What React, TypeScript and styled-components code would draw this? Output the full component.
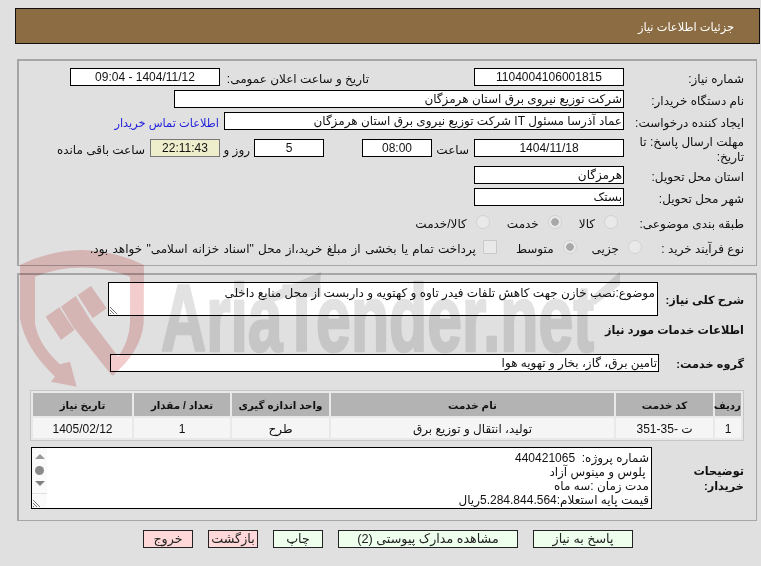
import React from "react";
import styled, { createGlobalStyle } from "styled-components";

const Global = createGlobalStyle`
  html, body { margin: 0; padding: 0; background: #e0e0e0; }
  body { font-family: "Liberation Sans", "DejaVu Sans", sans-serif; font-size: 12px; color: #111; }
`;

const Page = styled.div`
  position: relative; width: 761px; height: 566px; overflow: hidden; direction: rtl; background: #e0e0e0;
`;
const Header = styled.div`
  box-sizing: border-box; margin: 8px 1px 0 15px; height: 36px; border: 1px solid #111; background: #8c6c42;
  color: #fff; display: flex; align-items: center; padding: 1px 25px 0 0; font-size: 11.4px;
`;
const Panel = styled.section<{ $top: number; $h: number; $pt: number }>`
  box-sizing: border-box; margin: ${p => p.$top}px 4px 0 17px; height: ${p => p.$h}px;
  border: 1px solid #a6a6a6; border-width: 2px 1px 1px 2px; padding: ${p => p.$pt}px 12px 0 0;
  display: flex; flex-direction: column;
`;
const Row = styled.div<{ $h?: number; $mt?: number }>`
  display: flex; align-items: center; height: ${p => p.$h ?? 18}px; margin-top: ${p => p.$mt ?? 0}px; flex: none;
`;
const Label = styled.div<{ $w: number; $ms?: number; $bold?: boolean }>`
  width: ${p => p.$w}px; flex: none; text-align: right; line-height: 15px; padding-top: ${p => (p.$bold ? 2 : 4)}px;
  margin-right: ${p => p.$ms ?? 0}px;
  font-weight: ${p => (p.$bold ? 700 : 400)}; font-size: ${p => (p.$bold ? 11.3 : 12)}px;
`;
const Field = styled.div<{ $w: number; $center?: boolean; $ms?: number; $time?: boolean }>`
  box-sizing: border-box; width: ${p => p.$w}px; height: 18px; flex: none; margin-right: ${p => p.$ms ?? 0}px;
  border: 1px solid ${p => (p.$time ? "#777" : "#000")}; background: ${p => (p.$time ? "#eeeecc" : "#fff")};
  text-align: ${p => (p.$center ? "center" : "right")}; padding: 0 1px; line-height: 17px; font-size: 12px; white-space: nowrap; overflow: hidden;
`;
const Inline = styled.span<{ $ms?: number; $w?: number }>`
  margin-right: ${p => p.$ms ?? 0}px; flex: none; font-size: 12px; white-space: nowrap; padding-top: 3px;
  width: ${p => (p.$w ? `${p.$w}px` : "auto")};
`;
const ContactLink = styled.a`
  margin-right: 5px; padding-top: 3px; color: #2222dd; text-decoration: none; font-size: 11.4px; white-space: nowrap;
`;
const Choice = styled.label<{ $ms: number; $gap?: number }>`
  display: inline-flex; align-items: center; gap: ${p => p.$gap ?? 9}px; margin-right: ${p => p.$ms}px; font-size: 12px; white-space: nowrap;
`;
const ChoiceText = styled.span<{ $spread?: boolean }>`
  padding-top: 3px; word-spacing: ${p => (p.$spread ? 1 : 0)}px;
`;
const Radio = styled.input.attrs({ type: "radio", disabled: true })`
  appearance: none; width: 14px; height: 14px; margin: 0; border-radius: 50%; border: 1px solid #d2d2d2;
  background: #e9e9e9; flex: none; box-sizing: border-box; position: relative;
  &:checked { background: radial-gradient(circle, #a8a8a8 0 3.5px, #e9e9e9 4px); }
`;
const Check = styled.input.attrs({ type: "checkbox", disabled: true })`
  appearance: none; width: 14px; height: 14px; margin: 0; border: 1px solid #c8c8c8; background: #e9e9e9; flex: none; border-radius: 1px;
`;
const Area = styled.div<{ $w: number; $h: number }>`
  position: relative; box-sizing: border-box; width: ${p => p.$w}px; height: ${p => p.$h}px; flex: none;
  border: 1px solid #000; background: #fff; padding: 3px 2px 0; line-height: 14px; font-size: 12px; overflow: hidden;
`;
const Grip = styled.svg`
  position: absolute; left: 1px; bottom: 1px; width: 8px; height: 8px;
`;
const ScrollRail = styled.div`
  position: absolute; left: 0; top: 0; bottom: 0; width: 15px; background: #fafafa;
  display: flex; flex-direction: column; align-items: center; padding-top: 6px; box-sizing: border-box;
`;
const ArrowUp = styled.i`
  width: 0; height: 0; border: 5px solid transparent; border-top: 0; border-bottom: 5px solid #999; margin-bottom: 7px;
`;
const ArrowDown = styled.i`
  width: 0; height: 0; border: 5px solid transparent; border-bottom: 0; border-top: 5px solid #808080; margin-top: 6px;
`;
const Thumb = styled.i`
  width: 9px; height: 9px; border-radius: 50%; background: #8a8a8a;
`;
const RailLine = styled.i`
  align-self: stretch; height: 1px; background: #e0e0e0; margin-top: 7px;
`;
const Table = styled.table`
  width: 713px; margin: 18px 0 0 0; border: 1px solid #c6c6c6; border-spacing: 2px; table-layout: fixed;
  background: #e9e9e9; flex: none; font-size: 12px;
`;
const Th = styled.th`
  height: 23px; padding: 0; background: #b3b3b3; font-weight: 700; font-size: 10.3px; text-align: center; white-space: nowrap;
`;
const Td = styled.td`
  height: 18px; padding: 2px 0 0; background: #f5f5f5; text-align: center;
`;
const Buttons = styled.div`
  display: flex; gap: 15px; margin: 9px 128px 0 0;
`;
const Btn = styled.button<{ $w: number; $red?: boolean }>`
  box-sizing: border-box; width: ${p => p.$w}px; height: 18px; padding: 0; border: 1px solid #222; border-radius: 0;
  background: ${p => (p.$red ? "#ffd9d9" : "#eeffee")}; color: #222; font: inherit; font-size: 12.7px; line-height: 14px;
`;
const Watermark = styled.svg`
  position: absolute; left: 0; top: 0; width: 761px; height: 566px; pointer-events: none; mix-blend-mode: multiply;
`;

const Gripper = () => (
  <Grip viewBox="0 0 8 8">
    <path d="M0 1L7 8M0 4L4 8M0 7L1 8" stroke="#777" strokeWidth="1" fill="none" />
  </Grip>
);

export default function App() {
  return (
    <Page>
      <Global />
      <Header>جزئیات اطلاعات نیاز</Header>
      <Panel $top={15} $h={207} $pt={7}>
        <Row>
          <Label $w={120}>شماره نیاز:</Label>
          <Field $w={150} $center>1104004106001815</Field>
          <Label $w={145} $ms={105}>تاریخ و ساعت اعلان عمومی:</Label>
          <Field $w={150} $center $ms={4}>1404/11/12 - 09:04</Field>
        </Row>
        <Row $mt={4}>
          <Label $w={120}>نام دستگاه خریدار:</Label>
          <Field $w={450}>شرکت توزیع نیروی برق استان هرمزگان</Field>
        </Row>
        <Row $mt={4}>
          <Label $w={120}>ایجاد کننده درخواست:</Label>
          <Field $w={400}>عماد آذرسا مسئول IT شرکت توزیع نیروی برق استان هرمزگان</Field>
          <ContactLink href="#">اطلاعات تماس خریدار</ContactLink>
        </Row>
        <Row $mt={4} $h={28}>
          <Label $w={120}>مهلت ارسال پاسخ: تا تاریخ:</Label>
          <Field $w={150} $center>1404/11/18</Field>
          <Inline $ms={5} $w={37}>ساعت</Inline>
          <Field $w={70} $center>08:00</Field>
          <Field $w={70} $center $ms={38}>5</Field>
          <Inline $ms={4} $w={30}>روز و</Inline>
          <Field $w={70} $center $time>22:11:43</Field>
          <Inline $ms={5}>ساعت باقی مانده</Inline>
        </Row>
        <Row $mt={4}>
          <Label $w={120}>استان محل تحویل:</Label>
          <Field $w={150}>هرمزگان</Field>
        </Row>
        <Row $mt={4}>
          <Label $w={120}>شهر محل تحویل:</Label>
          <Field $w={150}>بستک</Field>
        </Row>
        <Row $mt={6} $h={20}>
          <Label $w={120}>طبقه بندی موضوعی:</Label>
          <Choice $ms={6}><Radio /><ChoiceText>کالا</ChoiceText></Choice>
          <Choice $ms={17}><Radio defaultChecked /><ChoiceText>خدمت</ChoiceText></Choice>
          <Choice $ms={17}><Radio /><ChoiceText>کالا/خدمت</ChoiceText></Choice>
        </Row>
        <Row $mt={5} $h={20}>
          <Label $w={102}>نوع فرآیند خرید :</Label>
          <Choice $ms={0}><Radio /><ChoiceText>جزیی</ChoiceText></Choice>
          <Choice $ms={15}><Radio defaultChecked /><ChoiceText>متوسط</ChoiceText></Choice>
          <Choice $ms={19} $gap={7}><Check /><ChoiceText $spread>پرداخت تمام یا بخشی از مبلغ خرید،از محل "اسناد خزانه اسلامی" خواهد بود.</ChoiceText></Choice>
        </Row>
      </Panel>
      <Panel $top={7} $h={248} $pt={7}>
        <Row $h={34}>
          <Label $w={86} $bold>شرح کلی نیاز:</Label>
          <Area $w={550} $h={34}>
            موضوع:نصب خازن جهت کاهش تلفات فیدر تاوه و کهتویه و داربست از محل منابع داخلی
            <Gripper />
          </Area>
        </Row>
        <Row $h={16} $mt={5}>
          <Label $w={200} $bold>اطلاعات خدمات مورد نیاز</Label>
        </Row>
        <Row $mt={17}>
          <Label $w={85} $bold>گروه خدمت:</Label>
          <Field $w={549}>تامین برق، گاز، بخار و تهویه هوا</Field>
        </Row>
        <Table>
          <colgroup>
            <col style={{ width: 26 }} />
            <col style={{ width: 97 }} />
            <col style={{ width: 283 }} />
            <col style={{ width: 97 }} />
            <col style={{ width: 96 }} />
            <col style={{ width: 99 }} />
          </colgroup>
          <thead>
            <tr>
              <Th>ردیف</Th><Th>کد خدمت</Th><Th>نام خدمت</Th><Th>واحد اندازه گیری</Th><Th>تعداد / مقدار</Th><Th>تاریخ نیاز</Th>
            </tr>
          </thead>
          <tbody>
            <tr>
              <Td>1</Td><Td>ت -35-351</Td><Td>تولید، انتقال و توزیع برق</Td><Td>طرح</Td><Td>1</Td><Td>1405/02/12</Td>
            </tr>
          </tbody>
        </Table>
        <Row $h={62} $mt={6}>
          <Label $w={92} $bold>توضیحات خریدار:</Label>
          <Area $w={621} $h={62}>
            شماره پروژه:&nbsp; 440421065<br />
            &nbsp;پلوس و مینوس آزاد<br />
            مدت زمان :سه ماه<br />
            قیمت پایه استعلام:5.284.844.564ریال
            <ScrollRail>
              <ArrowUp /><Thumb /><ArrowDown /><RailLine />
            </ScrollRail>
            <Gripper />
          </Area>
        </Row>
      </Panel>
      <Buttons>
        <Btn $w={100}>پاسخ به نیاز</Btn>
        <Btn $w={180}>مشاهده مدارک پیوستی (2)</Btn>
        <Btn $w={50}>چاپ</Btn>
        <Btn $w={50} $red>بازگشت</Btn>
        <Btn $w={50} $red>خروج</Btn>
      </Buttons>
      <Watermark viewBox="0 0 761 566">
        <g transform="translate(15 245) scale(.3333)" fill="#f3cdcd">
          <path d="M15 60Q200-30 387 60L386 235Q378 320 293 392L285 385L178 250L228 228L310 335Q342 290 345 235L345 95Q200 40 60 95L60 235Q70 300 135 358L165 350L185 425L108 410L120 395Q30 310 15 220Z" />
          <path d="M92 215L133 187L178 255L138 285Z" />
          <path d="M138 185L182 153L228 228L178 252Z" />
          <path d="M188 150L228 123L275 190L233 220Z" />
        </g>
        <g fill="#e2e2e2">
          <text x="161" y="351" direction="ltr" fontFamily="Liberation Sans" fontWeight="700" fontSize="94" textLength="433" lengthAdjust="spacingAndGlyphs" stroke="#e2e2e2" strokeWidth="2.5" strokeLinejoin="round">AriaTender.net</text>
          <path d="M260 298L321 272L320 285L265 305Z" />
          <path d="M590 298L620 272L620 285L595 305Z" />
        </g>
      </Watermark>
    </Page>
  );
}
